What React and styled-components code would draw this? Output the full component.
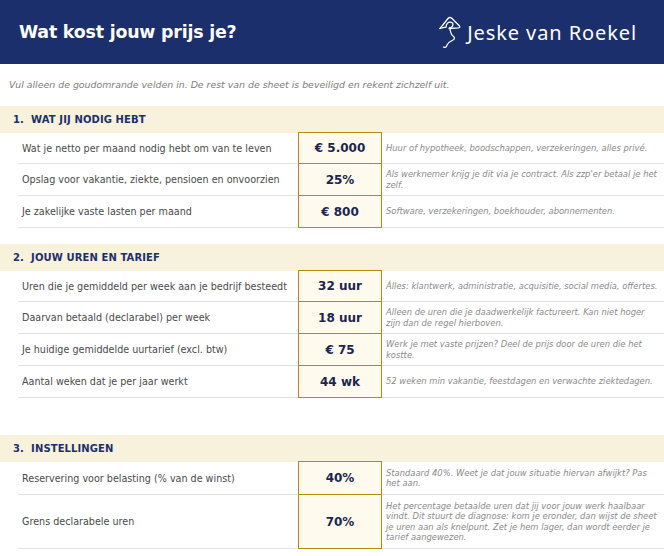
import React from "react";
import styled, { createGlobalStyle } from "styled-components";

const GlobalStyle = createGlobalStyle`
  body {
    margin: 0;
    background: #ffffff;
    font-family: "DejaVu Sans", "Noto Sans", sans-serif;
  }
  * { box-sizing: border-box; }
`;

const Page = styled.div`
  width: 664px;
  height: 556px;
  overflow: hidden;
  background: #ffffff;
`;

const Header = styled.header`
  height: 64px;
  background: #1b2f6c;
  display: flex;
  align-items: center;
  justify-content: space-between;
  padding: 0 27px 0 19px;
`;

const Title = styled.h1`
  margin: 0;
  color: #ffffff;
  font-size: 17.4px;
  font-weight: 700;
  letter-spacing: -0.2px;
`;

const Brand = styled.div`
  display: flex;
  align-items: center;
  gap: 5px;
  color: #ffffff;
  font-size: 20px;
  font-weight: 400;
  letter-spacing: 0.9px;
  font-family: "Noto Sans", "DejaVu Sans", sans-serif;
`;

const Intro = styled.p`
  margin: 0;
  padding: 15px 9px 0;
  height: 42px;
  font-size: 9.4px;
  font-style: italic;
  color: #7d7d7d;
`;

const Section = styled.section`
  margin-top: ${(p) => p.gap}px;
`;

const SectionHead = styled.h2`
  margin: 0;
  height: 27px;
  display: flex;
  align-items: center;
  padding-left: 13px;
  background: #f8f2dc;
  color: #1b2f6c;
  font-size: 10px;
  font-weight: 700;
  letter-spacing: 0.1px;
`;

const Rows = styled.div`
  margin-left: 18px;
`;

const Row = styled.div`
  display: grid;
  grid-template-columns: 280px 84px 1fr;
  height: ${(p) => p.h}px;
  border-bottom: 1px solid #e2e2e2;
`;

const Label = styled.div`
  display: flex;
  align-items: center;
  padding-left: 4px;
  font-size: 9.6px;
  color: #4a4a4a;
`;

const Field = styled.div`
  display: flex;
  align-items: center;
  justify-content: center;
  background: #fffaee;
  border: 1px solid #b58b0d;
  border-top: ${(p) => (p.first ? "1px solid #b58b0d" : "none")};
  margin-top: ${(p) => (p.first ? "-1px" : "0")};
  margin-bottom: -1px;
  color: #1b2550;
  font-size: 12px;
  font-weight: 700;
`;

const Note = styled.div`
  display: flex;
  align-items: center;
  padding: 0 4px;
  font-size: 8.4px;
  line-height: 10.5px;
  font-style: italic;
  color: #8a8a8a;
`;

const Logo = () => (
  <svg width="24" height="34" viewBox="0 0 24 34" fill="none" stroke="#ffffff" strokeWidth="1.3" strokeLinecap="round" strokeLinejoin="round">
    <path d="M2 13.5 L10 3.5 Q12 1.5 14 3.5 L21.5 11 Q22.5 12.5 20.5 12.8 L11 13.5" />
    <path d="M2 13.5 Q5 12.5 8 12.2 Q8.5 7 12.5 7.2 Q16 7.6 14.5 11 Q13.8 12.6 11.5 13" />
    <path d="M12 13.5 Q12.5 19 15 21 Q18 23 15 25 Q10.5 27 9 30 Q8 33.5 5.5 32" />
  </svg>
);

const sections = [
  {
    gap: 0,
    title: "1.\u00a0\u00a0WAT JIJ NODIG HEBT",
    rows: [
      ["Wat je netto per maand nodig hebt om van te leven", "€ 5.000", "Huur of hypotheek, boodschappen, verzekeringen, alles privé.", 31],
      ["Opslag voor vakantie, ziekte, pensioen en onvoorzien", "25%", "Als werknemer krijg je dit via je contract. Als zzp'er betaal je het zelf.", 32],
      ["Je zakelijke vaste lasten per maand", "€ 800", "Software, verzekeringen, boekhouder, abonnementen.", 32],
    ],
  },
  {
    gap: 16,
    title: "2.\u00a0\u00a0JOUW UREN EN TARIEF",
    rows: [
      ["Uren die je gemiddeld per week aan je bedrijf besteedt", "32 uur", "Álles: klantwerk, administratie, acquisitie, social media, offertes.", 31],
      ["Daarvan betaald (declarabel) per week", "18 uur", "Alleen de uren die je daadwerkelijk factureert. Kan niet hoger zijn dan de regel hierboven.", 32],
      ["Je huidige gemiddelde uurtarief (excl. btw)", "€ 75", "Werk je met vaste prijzen? Deel de prijs door de uren die het kostte.", 32],
      ["Aantal weken dat je per jaar werkt", "44 wk", "52 weken min vakantie, feestdagen en verwachte ziektedagen.", 32],
    ],
  },
  {
    gap: 37,
    title: "3.\u00a0\u00a0INSTELLINGEN",
    rows: [
      ["Reservering voor belasting (% van de winst)", "40%", "Standaard 40%. Weet je dat jouw situatie hiervan afwijkt? Pas het aan.", 33],
      ["Grens declarabele uren", "70%", "Het percentage betaalde uren dat jij voor jouw werk haalbaar vindt. Dit stuurt de diagnose: kom je eronder, dan wijst de sheet je uren aan als knelpunt. Zet je hem lager, dan wordt eerder je tarief aangewezen.", 54],
    ],
  },
];

export default function App() {
  return (
    <Page>
      <GlobalStyle />
      <Header>
        <Title>Wat kost jouw prijs je?</Title>
        <Brand>
          <Logo />
          Jeske van Roekel
        </Brand>
      </Header>
      <Intro>Vul alleen de goudomrande velden in. De rest van de sheet is beveiligd en rekent zichzelf uit.</Intro>
      {sections.map((s) => (
        <Section key={s.title} gap={s.gap}>
          <SectionHead>{s.title}</SectionHead>
          <Rows>
            {s.rows.map(([label, value, note, h], i) => (
              <Row key={label} h={h}>
                <Label>{label}</Label>
                <Field first={i === 0}>{value}</Field>
                <Note>{note}</Note>
              </Row>
            ))}
          </Rows>
        </Section>
      ))}
    </Page>
  );
}
